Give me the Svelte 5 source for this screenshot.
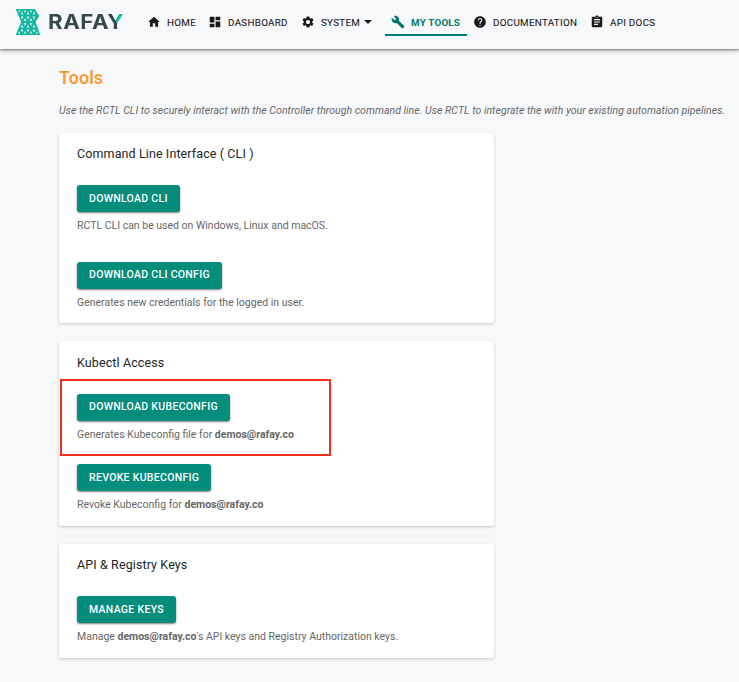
<script>
  const nav = [
    { label: 'HOME', w: 61, d: 'M10 20v-6h4v6h5v-8h3L12 3 2 12h3v8z' },
    { label: 'DASHBOARD', w: 93, d: 'M3 13h8V3H3v10zm0 8h8v-6H3v6zm10 0h8V11h-8v10zm0-18v6h8V3h-8z' },
    {
      label: 'SYSTEM', w: 90, menu: true,
      d: 'M19.14 12.94c.04-.3.06-.61.06-.94 0-.32-.02-.64-.07-.94l2.03-1.58c.18-.14.23-.41.12-.61l-1.92-3.32c-.12-.22-.37-.29-.59-.22l-2.39.96c-.5-.38-1.03-.7-1.62-.94l-.36-2.54c-.04-.24-.24-.41-.48-.41h-3.84c-.24 0-.43.17-.47.41l-.36 2.54c-.59.24-1.13.57-1.62.94l-2.39-.96c-.22-.08-.47 0-.59.22L2.74 8.87c-.12.21-.08.47.12.61l2.03 1.58c-.05.3-.09.63-.09.94s.02.64.07.94l-2.03 1.58c-.18.14-.23.41-.12.61l1.92 3.32c.12.22.37.29.59.22l2.39-.96c.5.38 1.03.7 1.62.94l.36 2.54c.05.24.24.41.48.41h3.84c.24 0 .44-.17.47-.41l.36-2.54c.59-.24 1.13-.56 1.62-.94l2.39.96c.22.08.47 0 .59-.22l1.92-3.32c.12-.22.07-.47-.12-.61l-2.01-1.58zM12 15.6c-1.98 0-3.6-1.62-3.6-3.6s1.62-3.6 3.6-3.6 3.6 1.62 3.6 3.6-1.62 3.6-3.6 3.6z'
    },
    { label: 'MY TOOLS', w: 82, active: true, d: 'M22.7 19l-9.1-9.1c.9-2.3.4-5-1.5-6.9-2-2-5-2.4-7.4-1.3L9 6 6 9 1.6 4.7C.4 7.1.9 10.1 2.9 12.1c1.9 1.9 4.6 2.4 6.9 1.5l9.1 9.1c.4.4 1 .4 1.4 0l2.3-2.3c.5-.4.5-1.1.1-1.4z' },
    { label: 'DOCUMENTATION', w: 117, d: 'M12 2C6.48 2 2 6.48 2 12s4.48 10 10 10 10-4.48 10-10S17.52 2 12 2zm1 17h-2v-2h2v2zm2.07-7.75l-.9.92C13.45 12.9 13 13.5 13 15h-2v-.5c0-1.1.45-2.1 1.17-2.83l1.24-1.26c.37-.36.59-.86.59-1.41 0-1.1-.9-2-2-2s-2 .9-2 2H8c0-2.21 1.79-4 4-4s4 1.79 4 4c0 .88-.36 1.68-.93 2.25z' },
    { label: 'API DOCS', w: 78, d: 'M19 3h-4.18C14.4 1.84 13.3 1 12 1c-1.3 0-2.4.84-2.82 2H5c-1.1 0-2 .9-2 2v14c0 1.1.9 2 2 2h14c1.1 0 2-.9 2-2V5c0-1.1-.9-2-2-2zm-7 0c.55 0 1 .45 1 1s-.45 1-1 1-1-.45-1-1 .45-1 1-1zm2 14H7v-2h7v2zm3-4H7v-2h10v2zm0-4H7V7h10v2z' }
  ];
</script>

<div class="page">
  <header>
    <div class="logo">
      <svg class="mark" viewBox="0 0 24 26" width="24" height="26">
        <clipPath id="mark"><path d="M0 0H18.5L23 7L19.5 13L24 26H0L5.5 13Z" /></clipPath>
        <g clip-path="url(#mark)">
          <rect width="24" height="26" fill="#c4ede7" />
          <g fill="none" stroke="#12b5a0" stroke-width="1.9">
            <path d="M0 .5H24M0 6.5H24M0 13H24M0 19.5H24M0 25.5H24" />
            <path d="M-6 0L6 26M0 0L12 26M6 0L18 26M12 0L24 26M18 0L30 26" />
            <path d="M6 0L-6 26M12 0L0 26M18 0L6 26M24 0L12 26M30 0L18 26" />
          </g>
        </g>
        <path d="M.6 .5H18.2L22.3 7L18.8 13L23.3 25.5H.6L6 13Z" fill="none" stroke="#12b5a0" stroke-width="1.2" />
      </svg>
      <span class="word">RAFA<span class="y">Y</span></span>
    </div>
    <nav>
      {#each nav as item}
        <a class:active={item.active} style:width="{item.w}px">
          <svg viewBox="0 0 24 24" width="14" height="14"><path d={item.d} /></svg>
          <span>{item.label}</span>
          {#if item.menu}<i class="caret"></i>{/if}
        </a>
      {/each}
    </nav>
  </header>

  <main>
    <h1>Tools</h1>
    <p class="intro">Use the RCTL CLI to securely interact with the Controller through command line. Use RCTL to integrate the with your existing automation pipelines.</p>

    <section class="cli">
      <h2>Command Line Interface ( CLI )</h2>
      <button>DOWNLOAD CLI</button>
      <p>RCTL CLI can be used on Windows, Linux and macOS.</p>
      <button class="up">DOWNLOAD CLI CONFIG</button>
      <p>Generates new credentials for the logged in user.</p>
    </section>

    <section class="kubectl">
      <h2>Kubectl Access</h2>
      <button class="up">DOWNLOAD KUBECONFIG</button>
      <p>Generates Kubeconfig file for <b>demos@rafay.co</b></p>
      <button>REVOKE KUBECONFIG</button>
      <p>Revoke Kubeconfig for <b>demos@rafay.co</b></p>
      <div class="highlight"></div>
    </section>

    <section class="keys">
      <h2>API &amp; Registry Keys</h2>
      <button>MANAGE KEYS</button>
      <p>Manage <b>demos@rafay.co</b>'s API keys and Registry Authorization keys.</p>
    </section>
  </main>
</div>

<style>
  .page {
    box-sizing: border-box;
    width: 739px;
    height: 682px;
    overflow: hidden;
    background: #f6f8fa;
    font-family: Roboto, sans-serif;
    color: #212529;
  }
  header {
    position: relative;
    display: flex;
    height: 49px;
    background: #f7f8fa;
    box-shadow: 0 1px 2px rgba(0, 0, 0, 0.42), 0 2px 5px rgba(0, 0, 0, 0.2);
  }
  .logo {
    display: flex;
    width: 125px;
    padding-left: 16px;
  }
  .mark {
    margin-top: 9px;
    flex: none;
  }
  .word {
    margin: 10px 0 0 8px;
    font: 700 19.5px/24px Inter, sans-serif;
    letter-spacing: 0.5px;
    color: #37474b;
    transform: scaleX(1.14);
    transform-origin: 0 50%;
  }
  .y {
    color: transparent;
    background: conic-gradient(from 0deg at 50% 54%, #14b8a0 90deg, #37474b 90deg);
    -webkit-background-clip: text;
    background-clip: text;
  }
  nav {
    display: flex;
    height: 36px;
  }
  a {
    box-sizing: border-box;
    display: flex;
    align-items: center;
    height: 36px;
    padding: 10px 0 0 6px;
    border-bottom: 2px solid transparent;
    font-size: 9.8px;
    font-weight: 400;
    line-height: 14px;
    letter-spacing: 0.3px;
    white-space: nowrap;
    color: #1a1a1a;
    -webkit-text-stroke: 0.1px currentColor;
  }
  a svg {
    flex: none;
    margin-right: 6px;
    fill: currentColor;
  }
  a span {
    position: relative;
    top: 1px;
  }
  a.active {
    border-color: #007d72;
    color: #00796b;
    font-weight: 700;
    letter-spacing: 0.2px;
    -webkit-text-stroke: 0;
  }
  .caret {
    margin-left: 4px;
    border: 4px solid transparent;
    border-top-color: currentColor;
    border-bottom: 0;
  }
  main {
    padding: 18px 0 0 59px;
  }
  h1 {
    margin: 0;
    font-size: 18px;
    font-weight: 500;
    line-height: 22px;
    color: #fb9524;
  }
  .intro {
    margin: 14px 0 15px;
    font-size: 10.5px;
    font-style: italic;
    line-height: 15px;
    letter-spacing: 0.042px;
    white-space: nowrap;
    color: #666;
  }
  section {
    position: relative;
    box-sizing: border-box;
    display: flex;
    flex-direction: column;
    align-items: flex-start;
    width: 435px;
    margin-bottom: 18px;
    padding: 12px 18px 0;
    border-radius: 2px;
    background: #fff;
    box-shadow: 0 1px 3px rgba(0, 0, 0, 0.2);
  }
  .cli { height: 190px; }
  .kubectl { height: 185px; padding-top: 13px; }
  .keys { height: 114px; }
  h2 {
    margin: 0 0 22px;
    font-size: 12.5px;
    font-weight: 400;
    line-height: 18px;
    letter-spacing: 0.11px;
  }
  button {
    height: 27px;
    padding: 0 12px;
    border: 0;
    border-radius: 3px;
    background: #048c7c;
    box-shadow: 0 1px 2px rgba(0, 0, 0, 0.5);
    font: 500 10.5px/27px Roboto, sans-serif;
    letter-spacing: 0.3px;
    white-space: nowrap;
    color: #fff;
  }
  button.up { padding-bottom: 2px; line-height: 25px; }
  section p {
    margin: 6px 0 0;
    font-size: 10.5px;
    line-height: 15px;
    white-space: nowrap;
    color: #666;
  }
  .cli p + button { margin-top: 29px; }
  .kubectl p + button { margin-top: 22px; }
  .highlight {
    position: absolute;
    left: 1px;
    top: 38px;
    box-sizing: border-box;
    width: 271px;
    height: 77px;
    border: 2px solid #f62d1b;
  }
</style>
